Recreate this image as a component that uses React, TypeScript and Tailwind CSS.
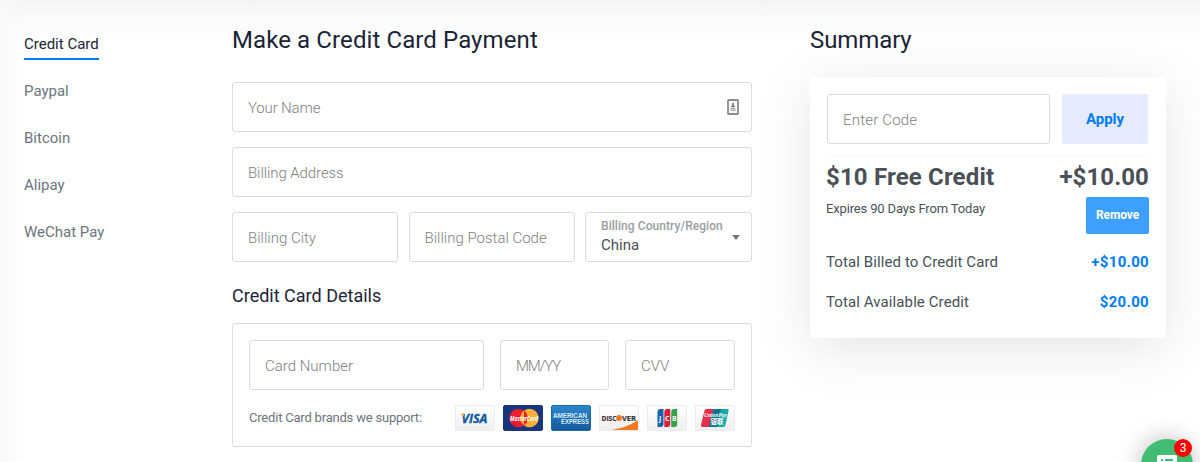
import React from "react";

const methods = ["Credit Card", "Paypal", "Bitcoin", "Alipay", "WeChat Pay"];

function Field({ label, className = "", tracking = "tracking-normal", children }: { label: string; className?: string; tracking?: string; children?: React.ReactNode }) {
  return (
    <label className={`flex h-[50px] items-center justify-between rounded-[3px] border border-[#dcdcdc] bg-white px-[15px] ${className}`}>
      <span className={`whitespace-nowrap pt-[3px] text-[15px] font-light text-[#808080] ${tracking}`}>{label}</span>
      {children}
    </label>
  );
}

function ContactIcon() {
  return (
    <svg width="12" height="16" viewBox="0 0 12 16" className="-mr-[3px] -mt-px shrink-0">
      <rect x="1" y="1" width="10" height="14" rx="0.5" fill="#fafafa" stroke="#8c8c8c" strokeWidth="1.8" />
      <circle cx="6" cy="5" r="1.1" fill="#777" />
      <path d="M4 8.3V7.4L5.3 6h1.4L8 7.4v.9z" fill="#777" />
      <path d="M3.5 9.700h5M3.5 11.300h5" stroke="#a8a8a8" strokeWidth="1.3" />
    </svg>
  );
}

function Brand({ children, className = "border-[#ededed] bg-linear-to-b from-white to-[#eeeeee]" }: { children: React.ReactNode; className?: string }) {
  return (
    <span className={`block h-[26px] w-10 overflow-hidden rounded-[2px] border ${className}`}>
      <svg width="38" height="24" viewBox="1 1 38 24" fontFamily="'Open Sans', 'Liberation Sans', sans-serif">
        {children}
      </svg>
    </span>
  );
}

function Brands() {
  return (
    <div className="flex gap-2">
      <Brand>
        <text x="6.500" y="17.500" fontSize="12" fontWeight="700" fontStyle="italic" fill="#0c57a0" stroke="#0c57a0" strokeWidth="0.300" textLength="26" lengthAdjust="spacingAndGlyphs">VISA</text>
        <path d="M5 8.700h3.800l1 4C8.500 10.700 7 9.500 5 8.700z" fill="#f5a623" />
      </Brand>
      <Brand className="border-[#18367e] bg-[#18367e]">
        <circle cx="15.500" cy="13" r="9.200" fill="#ed1c2e" />
        <circle cx="26.500" cy="13" r="9.200" fill="#fbb034" />
        <path d="M21 5.600a9.200 9.200 0 0 1 0 14.800z" fill="#ed1c2e" />
        <text x="7" y="15.500" fontSize="7" fontWeight="700" fontStyle="italic" fill="#fff" textLength="28" lengthAdjust="spacingAndGlyphs">MasterCard</text>
      </Brand>
      <Brand className="border-[#1b69ad] bg-linear-to-b from-[#2b86ca] to-[#16589b]">
        <g fill="#d7edfb" fontWeight="700" fontSize="7" fontFamily="'Liberation Sans', sans-serif">
          <text x="2" y="12.600" textLength="34" lengthAdjust="spacingAndGlyphs">AMERICAN</text>
          <text x="10" y="19.300" textLength="28" lengthAdjust="spacingAndGlyphs">EXPRESS</text>
        </g>
      </Brand>
      <Brand>
        <path d="M10 25.500C23 23.500 32 20 39.500 15v11H10z" fill="#f47820" />
        <g fontSize="7.500" fontWeight="700" fill="#3b3533" stroke="#3b3533" strokeWidth="0.200">
          <text x="2.500" y="15.700" textLength="15" lengthAdjust="spacingAndGlyphs">DISC</text>
          <text x="23" y="15.700" textLength="14" lengthAdjust="spacingAndGlyphs">VER</text>
        </g>
        <circle cx="20" cy="13" r="2.900" fill="#f47820" />
      </Brand>
      <Brand>
        <path d="M13.500 4h3v15a3 3 0 0 1-3 3h-3V7a3 3 0 0 1 3-3z" fill="#1763a9" />
        <path d="M20.300 4h3v15a3 3 0 0 1-3 3h-3V7a3 3 0 0 1 3-3z" fill="#d91f3d" />
        <path d="M27.200 4h3v15a3 3 0 0 1-3 3h-3V7a3 3 0 0 1 3-3z" fill="#31a344" />
        <g fontSize="7" fontWeight="700" fill="#fff">
          <text x="12" y="15.500">J</text>
          <text x="18" y="15.500">C</text>
          <text x="25" y="15.500">B</text>
        </g>
      </Brand>
      <Brand>
        <path d="M11.500 4H19l-4 18H7.500q-2 0-1.500-2L9.500 5.500Q9.900 4 11.500 4z" fill="#e5304b" />
        <path d="M18 4h9l-4 18h-9z" fill="#16728c" />
        <path d="M26 4h6.500q1.500 0 1.100 1.500L30.400 20q-.4 2-2 2H22z" fill="#17aaa8" />
        <g fill="#fff" fontWeight="700">
          <text x="9" y="11.500" fontSize="6.500" fontStyle="italic" fontFamily="'Liberation Serif', serif" textLength="23" lengthAdjust="spacingAndGlyphs">UnionPay</text>
          <text x="15.500" y="19.200" fontSize="6.500" fontFamily="'Noto Sans CJK SC', sans-serif" textLength="13">银联</text>
        </g>
      </Brand>
    </div>
  );
}

export default function App() {
  return (
    <div className="relative h-[462px] w-[1200px] overflow-hidden bg-white font-['Roboto',sans-serif] text-[#495057]">
      <div className="absolute inset-x-0 top-0 h-11 bg-linear-to-b from-[#f2f4f3] via-[#fafbfb] via-45% to-transparent" />
      <div className="absolute inset-y-0 left-0 w-6 bg-linear-to-r from-[#f9f9f9] to-white/0" />

      <div className="relative flex">
        <nav className="flex w-[232px] shrink-0 flex-col items-start gap-[18px] pl-6 pt-[31px]">
          {methods.map((m, i) => (
            <a
              key={m}
              className={`flex h-[29px] items-start whitespace-nowrap border-b-2 pt-[2px] text-[15px] leading-[22px] ${i === 0 ? "border-[#007bff] text-[#1b2437]" : "border-transparent text-[#6c757d]"}`}
            >
              {m}
            </a>
          ))}
        </nav>

        <main className="w-[520px] shrink-0 pt-[25px]">
          <h1 className="h-[57px] whitespace-nowrap text-[24px] leading-[30px] tracking-[0.1px] text-[#1b2437]">Make a Credit Card Payment</h1>
          <div className="flex flex-col gap-[15px]">
            <Field label="Your Name" tracking="tracking-[-0.15px]">
              <ContactIcon />
            </Field>
            <Field label="Billing Address" tracking="tracking-[-0.08px]" />
            <div className="flex justify-between">
              <Field label="Billing City" className="w-[166px]" />
              <Field label="Billing Postal Code" className="w-[166px]" />
              <div className="flex h-[50px] w-[167px] items-center justify-between rounded-[3px] border border-[#dcdcdc] bg-white pl-[15px] pr-[11px]">
                <div className="whitespace-nowrap">
                  <div className="-mt-[2px] text-[12px] font-medium leading-[18px] tracking-[0.06px] text-[#999da2]">Billing Country/Region</div>
                  <div className="text-[15px] leading-[21px]">China</div>
                </div>
                <svg width="8" height="5" viewBox="0 0 8 5" className="shrink-0">
                  <path d="M0 0h8L4 5z" fill="#777" />
                </svg>
              </div>
            </div>
          </div>
          <h2 className="mt-[22px] h-[39px] whitespace-nowrap text-[18px] leading-6 text-[#1b2437]">Credit Card Details</h2>
          <section className="h-[124px] rounded-[3px] border border-[#dcdcdc] bg-white p-4">
            <div className="flex gap-4">
              <Field label="Card Number" className="w-[235px]" />
              <Field label="MM/YY" className="w-[109px]" tracking="tracking-[-1.2px]" />
              <Field label="CVV" className="w-[110px]" />
            </div>
            <div className="mt-[15px] flex items-center justify-between">
              <span className="whitespace-nowrap text-[13px] tracking-[-0.2px] text-[#6c757d]">Credit Card brands we support:</span>
              <Brands />
            </div>
          </section>
        </main>

        <aside className="ml-[58px] w-[356px] shrink-0 pt-[25px]">
          <h1 className="h-[52px] text-[24px] leading-[30px] tracking-[-0.1px] text-[#1b2437]">Summary</h1>
          <section className="h-[261px] bg-white pl-4 pr-[17px] pt-[17px] shadow-[0_10px_50px_rgba(30,60,50,0.13)]">
            <div className="flex justify-between pl-px pr-px">
              <Field label="Enter Code" className="w-[223px]" tracking="tracking-[0.2px]" />
              <button className="h-[50px] w-[86px] rounded-[3px] bg-[#e5ebfc] text-[15px] font-bold text-[#007bff]">Apply</button>
            </div>
            <div className="mt-3 flex h-[41px] items-center justify-between border-t border-[#f8f9fa] text-[24px] font-bold">
              <span className="whitespace-nowrap tracking-[0.16px]">$10 Free Credit</span>
              <span className="whitespace-nowrap tracking-[0.1px]">+$10.00</span>
            </div>
            <div className="flex h-[37px] justify-between">
              <span className="whitespace-nowrap pt-[2px] text-[13px] leading-5 tracking-[-0.15px]">Expires 90 Days From Today</span>
              <button className="h-[37px] w-[63px] rounded-[2px] bg-[#3d9fff] pb-[2px] text-[12px] font-bold tracking-[-0.1px] text-white">Remove</button>
            </div>
            <div className="mt-2 flex h-10 items-center justify-between text-[15px] tracking-[0.1px]">
              <span className="whitespace-nowrap">Total Billed to Credit Card</span>
              <span className="font-bold tracking-[0.3px] text-[#007bff]">+$10.00</span>
            </div>
            <div className="flex h-10 items-center justify-between text-[15px] tracking-[0.1px]">
              <span className="whitespace-nowrap">Total Available Credit</span>
              <span className="font-bold tracking-[0.3px] text-[#007bff]">$20.00</span>
            </div>
          </section>
        </aside>
      </div>

      <button className="absolute left-[1141px] top-[439px] flex size-[52px] justify-center rounded-full bg-[#41bd73] pt-4 shadow-[0_0_24px_rgba(0,0,0,0.28)]">
        <svg width="20" height="18" viewBox="0 0 20 18">
          <path d="M2 0h16q2 0 2 2v13H0V2Q0 0 2 0z" fill="#fff" />
          <path d="M4 5h2M8 5h8M4 8h2M8 8h8" stroke="#41bd73" strokeWidth="1.800" />
        </svg>
      </button>
      <span className="absolute left-[1174px] top-[439px] flex size-[18px] items-center justify-center rounded-full bg-[#f00] text-[12px] text-white">3</span>
    </div>
  );
}
